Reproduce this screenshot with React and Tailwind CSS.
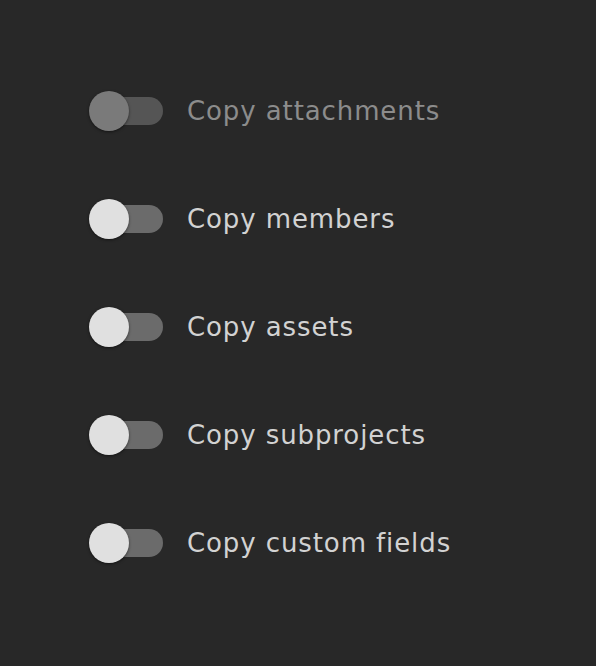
import React from 'react';

const items = [
    { label: 'Copy attachments', disabled: true },
    { label: 'Copy members' },
    { label: 'Copy assets' },
    { label: 'Copy subprojects' },
    { label: 'Copy custom fields' },
];

const Toggle = ({ disabled }) => (
    <div className="relative w-[74px] h-10 shrink-0">
        <div className={`absolute left-[6px] top-[6px] w-[68px] h-7 rounded-full ${disabled ? 'bg-[#555555]' : 'bg-[#6b6b6b]'}`} />
        <div className={`absolute left-0 top-0 w-10 h-10 rounded-full shadow-[0_1px_3px_rgba(0,0,0,0.5)] ${disabled ? 'bg-[#7a7a7a]' : 'bg-[#e0e0e0]'}`} />
    </div>
);

const App = () => {
    return (
        <div className="w-[596px] h-[666px] bg-[#282828] pt-[91px] pl-[89px]" style={{ fontFamily: '"DejaVu Sans", sans-serif' }}>
            <div className="flex flex-col gap-[68px]">
                {items.map((item) => (
                    <div key={item.label} className="flex items-center gap-6 h-10">
                        <Toggle disabled={item.disabled} />
                        <span className={`text-[26px] leading-none tracking-[0.9px] ${item.disabled ? 'text-[#8c8c8c]' : 'text-[#d2d2d2]'}`}>
                            {item.label}
                        </span>
                    </div>
                ))}
            </div>
        </div>
    );
};

export default App;
